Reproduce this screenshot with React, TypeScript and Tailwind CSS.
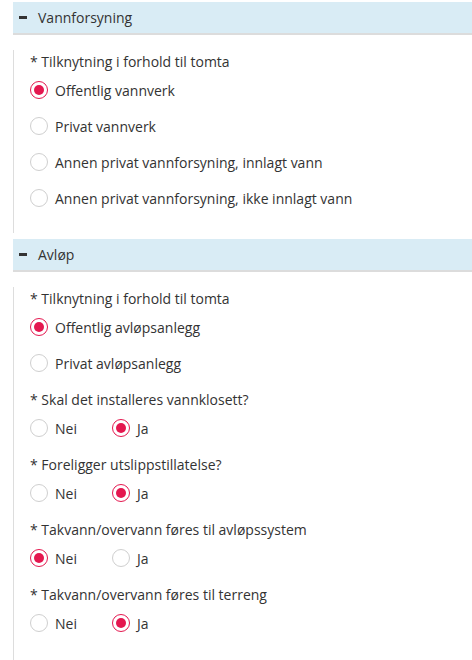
import React from "react";

type Opt = { label: string; checked?: boolean };

function Radio({ checked }: { checked?: boolean }) {
  return checked ? (
    <span className="flex h-[18px] w-[18px] shrink-0 items-center justify-center rounded-full border-[1.5px] border-[#e4174f] bg-white">
      <span className="h-[10px] w-[10px] rounded-full bg-[#e4174f]" />
    </span>
  ) : (
    <span className="h-[18px] w-[18px] shrink-0 rounded-full border border-[#cfcfcf] bg-white" />
  );
}

function Question({ label, options, inline }: { label: string; options: Opt[]; inline?: boolean }) {
  return (
    <div className="flex flex-col">
      <div className="h-[20px] leading-[20px]">* {label}</div>
      {inline ? (
        <div className="flex h-[36px] items-center">
          {options.map((o) => (
            <div key={o.label} className="flex w-[82px] items-center gap-[7px]">
              <Radio checked={o.checked} />
              <span>{o.label}</span>
            </div>
          ))}
        </div>
      ) : (
        options.map((o) => (
          <div key={o.label} className="flex h-[36px] items-center gap-[7px]">
            <Radio checked={o.checked} />
            <span>{o.label}</span>
          </div>
        ))
      )}
    </div>
  );
}

function Header({ title }: { title: string }) {
  return (
    <div className="flex h-[33px] items-center border-b-2 border-[#dcdcdc] bg-[#d9ecf5] pl-[6px]">
      <span className="mr-[11px] h-[3px] w-[8px] bg-[#333]" />
      <span className="text-[14px] text-[#333]">{title}</span>
    </div>
  );
}

export default function App() {
  return (
    <div
      className="min-h-[660px] bg-white pl-[13px] pt-[2px] text-[14px] text-[#333]"
      style={{ fontFamily: '"Open Sans", "Noto Sans", sans-serif' }}
    >
      <Header title="Vannforsyning" />
      <div className="mt-[15px] flex flex-col border-l border-[#dddddd] pb-[17px] pl-[16px] pt-[2px]">
        <Question
          label="Tilknytning i forhold til tomta"
          options={[
            { label: "Offentlig vannverk", checked: true },
            { label: "Privat vannverk" },
            { label: "Annen privat vannforsyning, innlagt vann" },
            { label: "Annen privat vannforsyning, ikke innlagt vann" },
          ]}
        />
      </div>
      <div className="mt-[6px]">
        <Header title="Avløp" />
      </div>
      <div className="mt-[15px] flex flex-col gap-[9px] border-l border-[#dddddd] pb-[30px] pl-[16px] pt-[2px]">
        <Question
          label="Tilknytning i forhold til tomta"
          options={[{ label: "Offentlig avløpsanlegg", checked: true }, { label: "Privat avløpsanlegg" }]}
        />
        <Question label="Skal det installeres vannklosett?" inline options={[{ label: "Nei" }, { label: "Ja", checked: true }]} />
        <Question label="Foreligger utslippstillatelse?" inline options={[{ label: "Nei" }, { label: "Ja", checked: true }]} />
        <Question label="Takvann/overvann føres til avløpssystem" inline options={[{ label: "Nei", checked: true }, { label: "Ja" }]} />
        <Question label="Takvann/overvann føres til terreng" inline options={[{ label: "Nei" }, { label: "Ja", checked: true }]} />
      </div>
    </div>
  );
}
